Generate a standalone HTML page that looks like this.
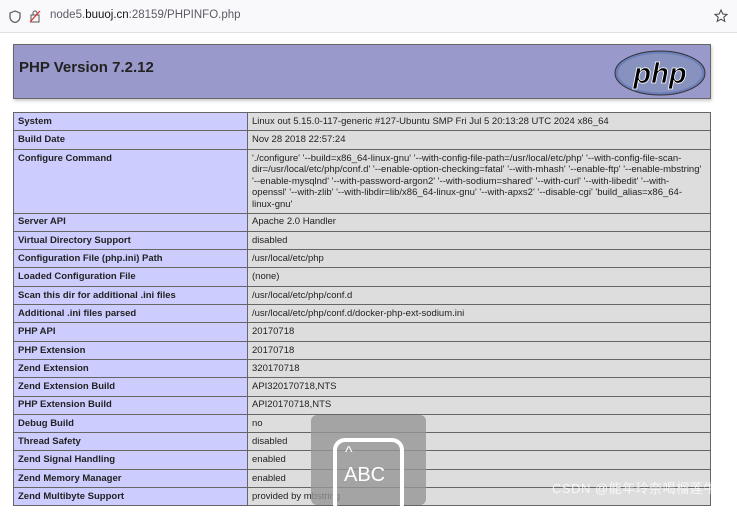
<!DOCTYPE html>
<html><head><meta charset="utf-8"><style>
body{margin:0;width:737px;height:500px;overflow:hidden;background:#fff;font-family:"Liberation Sans",sans-serif;position:relative}
.bar{position:absolute;left:0;top:0;width:737px;height:32px;background:#f9f9fb;border-bottom:1px solid #e0e0e6}
.url{position:absolute;left:50px;top:9px;font-size:11.5px;color:#5b5b66}
.url b{color:#15141a;font-weight:normal}
.hdr{position:absolute;left:13px;top:44px;width:696px;height:53px;background:#9999cc;border:1px solid #666;box-shadow:1px 2px 3px #ccc}
.hdr h1{margin:0;position:absolute;left:5px;top:14px;font-size:15px;font-weight:bold;color:#222}
.logo{position:absolute;right:4px;top:5px}
table{position:absolute;left:13px;top:112px;width:698px;border-collapse:collapse;font-size:9.5px;color:#222}
td{border:1px solid #666;padding:0 4px;height:17.3px;vertical-align:middle;line-height:11.5px}
td.e{background:#ccccff;font-weight:bold;width:225px}
td.v{background:#dddddd}
.ov{position:absolute;left:311px;top:415px;width:115px;height:90px;background:rgba(150,150,150,.8);border-radius:6px}
.ico{position:absolute;left:22px;top:23px;width:63px;height:70px;border:4px solid #fff;border-radius:12px;color:#fff;font-size:20px}
.wm{position:absolute;left:552px;top:478px;font-size:13px;color:rgba(255,255,255,.8);font-family:"Liberation Sans","Noto Sans CJK SC",sans-serif;letter-spacing:.5px}
</style></head><body>
<div class="bar">
<svg style="position:absolute;left:9px;top:10px" width="12" height="13" viewBox="0 0 12 13"><path d="M6 1L1 3v4c0 3 2.5 5 5 5.5C8.5 12 11 10 11 7V3z" fill="none" stroke="#555" stroke-width="1.2"/></svg>
<svg style="position:absolute;left:29px;top:9px" width="12" height="14" viewBox="0 0 12 14"><rect x="2" y="6" width="8" height="7" fill="none" stroke="#555"/><path d="M4 6V4a2 2 0 0 1 4 0v2" fill="none" stroke="#555"/><path d="M1 13L11 2" stroke="#d33" stroke-width="1.3"/></svg>
<div class="url">node5.<b>buuoj.cn</b>:28159/PHPINFO.php</div>
<svg style="position:absolute;left:714px;top:9px" width="14" height="14" viewBox="0 0 14 14"><path d="M7 1l1.8 4 4.2.4-3.2 2.8 1 4.2L7 10.2 3.2 12.4l1-4.2L1 5.4l4.2-.4z" fill="none" stroke="#444"/></svg>
</div>
<div class="hdr"><h1>PHP Version 7.2.12</h1>
<svg class="logo" width="92" height="46" viewBox="0 0 92 46"><ellipse cx="46" cy="23" rx="45" ry="22" fill="#6c7eb7" stroke="#333" stroke-width="1"/><ellipse cx="46" cy="23" rx="42" ry="19.5" fill="#8892bf"/><text x="46" y="33" text-anchor="middle" font-family="Liberation Sans" font-style="italic" font-weight="bold" font-size="29" fill="#000" stroke="#fff" stroke-width=".8">php</text></svg>
</div>
<table>
<tr><td class="e">System</td><td class="v">Linux out 5.15.0-117-generic #127-Ubuntu SMP Fri Jul 5 20:13:28 UTC 2024 x86_64</td></tr>
<tr><td class="e">Build Date</td><td class="v">Nov 28 2018 22:57:24</td></tr>
<tr><td class="e" style="vertical-align:top;padding-top:3px;height:60px">Configure Command</td><td class="v" style="vertical-align:top;padding-top:3px;padding-right:8px">'./configure' '--build=x86_64-linux-gnu' '--with-config-file-path=/usr/local/etc/php' '--with-config-file-scan-dir=/usr/local/etc/php/conf.d' '--enable-option-checking=fatal' '--with-mhash' '--enable-ftp' '--enable-mbstring' '--enable-mysqlnd' '--with-password-argon2' '--with-sodium=shared' '--with-curl' '--with-libedit' '--with-openssl' '--with-zlib' '--with-libdir=lib/x86_64-linux-gnu' '--with-apxs2' '--disable-cgi' 'build_alias=x86_64-linux-gnu'</td></tr>
<tr><td class="e">Server API</td><td class="v">Apache 2.0 Handler</td></tr>
<tr><td class="e">Virtual Directory Support</td><td class="v">disabled</td></tr>
<tr><td class="e">Configuration File (php.ini) Path</td><td class="v">/usr/local/etc/php</td></tr>
<tr><td class="e">Loaded Configuration File</td><td class="v">(none)</td></tr>
<tr><td class="e">Scan this dir for additional .ini files</td><td class="v">/usr/local/etc/php/conf.d</td></tr>
<tr><td class="e">Additional .ini files parsed</td><td class="v">/usr/local/etc/php/conf.d/docker-php-ext-sodium.ini</td></tr>
<tr><td class="e">PHP API</td><td class="v">20170718</td></tr>
<tr><td class="e">PHP Extension</td><td class="v">20170718</td></tr>
<tr><td class="e">Zend Extension</td><td class="v">320170718</td></tr>
<tr><td class="e">Zend Extension Build</td><td class="v">API320170718,NTS</td></tr>
<tr><td class="e">PHP Extension Build</td><td class="v">API20170718,NTS</td></tr>
<tr><td class="e">Debug Build</td><td class="v">no</td></tr>
<tr><td class="e">Thread Safety</td><td class="v">disabled</td></tr>
<tr><td class="e">Zend Signal Handling</td><td class="v">enabled</td></tr>
<tr><td class="e">Zend Memory Manager</td><td class="v">enabled</td></tr>
<tr><td class="e">Zend Multibyte Support</td><td class="v">provided by mbstring</td></tr>
</table>
<div class="ov"><div class="ico"><div style="position:absolute;left:8px;top:2px;font-size:16px">^</div><div style="position:absolute;left:7px;top:22px">ABC</div></div></div>
<div class="wm">CSDN @能年玲奈喝榴莲牛奶</div>
</body></html>
